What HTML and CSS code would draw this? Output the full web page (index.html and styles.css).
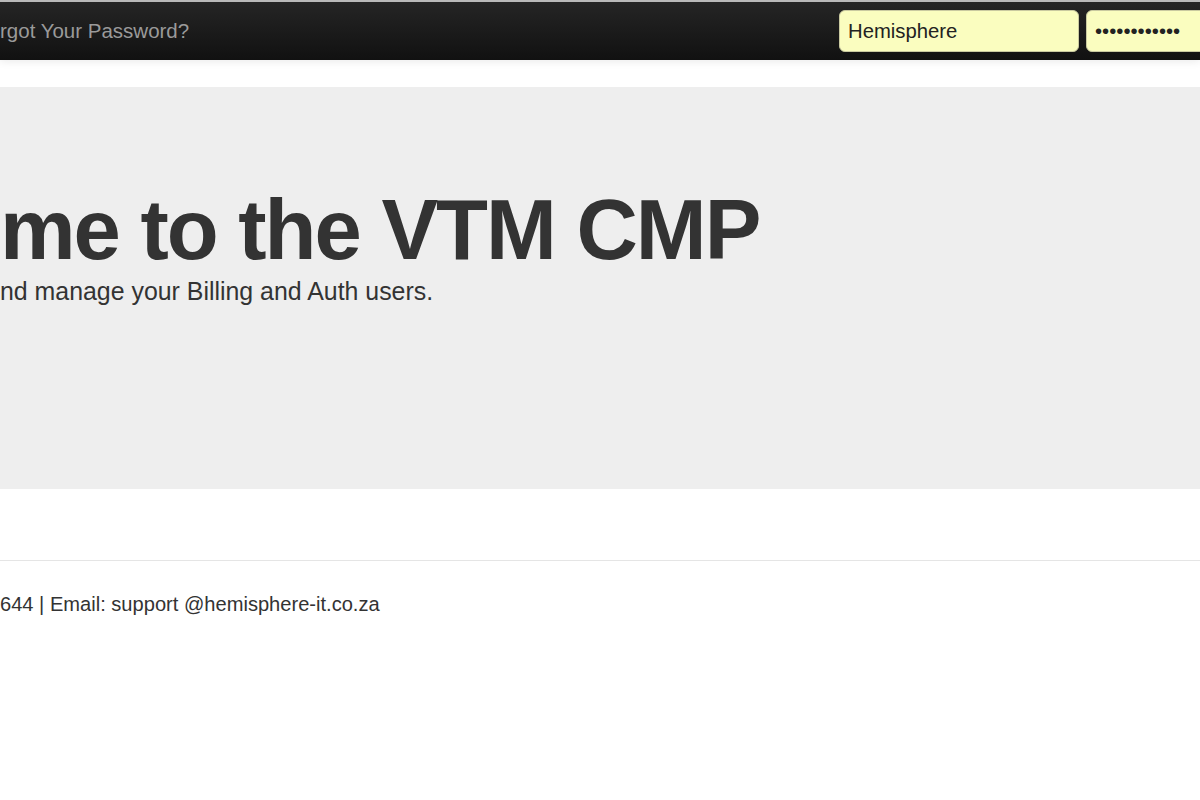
FILE: index.html
```html
<!DOCTYPE html>
<html lang="en">
<head>
<meta charset="utf-8">
<title>VTM CMP</title>
<link rel="stylesheet" href="styles.css">
</head>
<body>
<div class="navbar">
  <div class="navbar-inner">
    <a class="nav-link" href="#">rgot Your Password?</a>
    <form class="login-form">
      <input class="login-input" type="text" value="Hemisphere">
      <input class="login-input" type="password" value="hemisphere12">
    </form>
  </div>
</div>
<div class="hero">
  <h1 class="hero-title">me to the VTM CMP</h1>
  <p class="hero-lead">nd manage your Billing and Auth users.</p>
</div>
<hr class="divider">
<footer class="footer">
  <p class="footer-text">644 | Email: support @hemisphere-it.co.za</p>
</footer>
</body>
</html>
```

FILE: styles.css
```css
html, body {
  margin: 0;
  padding: 0;
  background: #fff;
  overflow: hidden;
}
body {
  font-family: "Liberation Sans", Arial, Helvetica, sans-serif;
  color: #333;
  width: 1200px;
  height: 800px;
}
.navbar {
  border-top: 2px solid #b9b9b9;
  background: linear-gradient(#252525, #111111);
  height: 58px;
  box-shadow: 0 2px 8px rgba(0, 0, 0, 0.08);
}
.navbar-inner {
  display: flex;
  align-items: center;
  height: 100%;
}
.nav-link {
  margin-left: 0;
  color: #9a9a9a;
  font-size: 20.5px;
  text-decoration: none;
  white-space: nowrap;
}
.login-form {
  display: flex;
  gap: 7px;
  margin-left: auto;
  margin-right: -126px;
}
.login-input {
  box-sizing: border-box;
  width: 240px;
  height: 42px;
  border: 1px solid #c9c9a0;
  border-radius: 6px;
  background: #fafdbf;
  font-family: "Liberation Sans", Arial, sans-serif;
  font-size: 20.3px;
  color: #222;
  padding: 0 8px;
  outline: none;
}
.hero {
  margin-top: 27px;
  background: #eeeeee;
  height: 402px;
  box-sizing: border-box;
  padding-top: 100px;
  overflow: hidden;
}
.hero-title {
  margin: 0;
  font-size: 85px;
  font-weight: bold;
  line-height: 1;
  letter-spacing: -2px;
  color: #333;
  white-space: nowrap;
}
.hero-lead {
  margin: 4px 0 0;
  font-size: 24.9px;
  line-height: 30px;
  color: #333;
  white-space: nowrap;
}
.divider {
  margin: 71px 0 0;
  border: 0;
  border-top: 1px solid #e5e5e5;
}
.footer-text {
  margin: 32px 0 0;
  font-size: 20.1px;
  color: #333;
  white-space: nowrap;
}
```
